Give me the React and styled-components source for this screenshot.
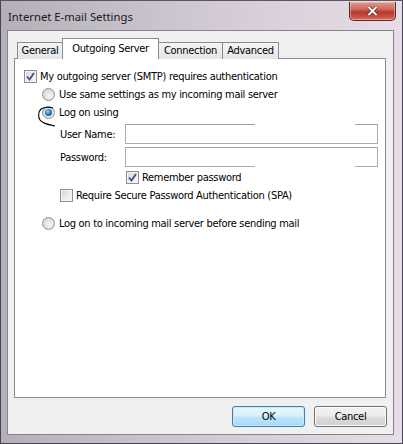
import React from "react";
import styled, { createGlobalStyle, css } from "styled-components";

const Global = createGlobalStyle`
  html, body { margin: 0; padding: 0; background: #ffffff; overflow: hidden; }
  * { box-sizing: border-box; }
`;

const Window = styled.div`
  width: 403px;
  height: 444px;
  display: flex;
  flex-direction: column;
  border: 1px solid #4a4452;
  border-top-color: #5a5560;
  background: linear-gradient(90deg, #b4afba 0%, #c8c1cb 35%, #dbd1dc 70%, #e6dde6 100%);
  font-family: "DejaVu Sans Condensed", "DejaVu Sans", sans-serif;
  font-size: 11px;
  letter-spacing: -0.3px;
  color: #000;
`;

const TitleBar = styled.div`
  height: 29px;
  display: flex;
  align-items: center;
  padding-left: 7px;
`;

const Title = styled.span`
  font-family: "Noto Sans", "Open Sans", sans-serif;
  font-size: 11.3px;
  letter-spacing: 0;
  color: #1a1a1a;
  margin-top: 1px;
`;

const CloseButton = styled.div`
  margin-left: auto;
  margin-right: 6px;
  align-self: flex-start;
  margin-top: 1px;
  width: 47px;
  height: 19px;
  border: 1px solid #5b2a26;
  border-top: none;
  border-radius: 0 0 5px 5px;
  background: linear-gradient(#dd9a90 0%, #cf6a5c 40%, #b8382c 55%, #c85446 85%, #d97a68 100%);
  box-shadow: inset 0 0 0 1px rgba(255, 220, 210, 0.45);
  display: flex;
  align-items: center;
  justify-content: center;
`;

const Client = styled.div`
  flex: 1;
  margin: 0 8px 8px 6px;
  background: #f0f0f0;
  border: 1px solid #858585;
  padding: 7px 7px 0 6px;
  display: flex;
  flex-direction: column;
`;

const TabStrip = styled.div`
  display: flex;
  align-items: flex-end;
  height: 21px;
  margin-bottom: -1px;
  padding-left: 4px;
  position: relative;
  z-index: 2;
`;

const Tab = styled.div`
  width: ${(p) => p.$w}px;
  height: 17px;
  display: flex;
  align-items: center;
  justify-content: center;
  border: 1px solid #898c95;
  border-bottom: none;
  margin-left: -1px;
  background: linear-gradient(#f4f4f4, #e5e5e5);
  padding-bottom: 1px;
  ${(p) =>
    p.$active &&
    css`
      height: 21px;
      background: #ffffff;
      position: relative;
      z-index: 3;
      padding-bottom: 2px;
    `}
`;

const Panel = styled.div`
  height: 340px;
  background: #ffffff;
  border: 1px solid #898c95;
  position: relative;
  z-index: 1;
  padding: 8px 7px 0 9px;
  display: flex;
  flex-direction: column;
`;

const Row = styled.div`
  position: relative;
  display: flex;
  align-items: center;
  height: ${(p) => p.$h || 18}px;
  margin-left: ${(p) => p.$indent || 0}px;
  margin-top: ${(p) => p.$top || 0}px;
  gap: ${(p) => (p.$field ? 0 : 3)}px;
`;

const Label = styled.span`
  white-space: nowrap;
`;

const FieldLabel = styled.span`
  width: 65px;
  white-space: nowrap;
`;

const Box = styled.span`
  width: 13px;
  height: 13px;
  flex: none;
  border: 1px solid #8e8f8f;
  background: linear-gradient(135deg, #d2d5da 0%, #eeeeee 60%, #f8f8f8 100%);
  box-shadow: inset 0 0 0 1px #f4f4f4;
  display: flex;
  align-items: center;
  justify-content: center;
`;

const Radio = styled.span`
  width: 13px;
  height: 13px;
  flex: none;
  border-radius: 50%;
  border: 1px solid #8e8f8f;
  background: radial-gradient(circle at 60% 60%, #f6f6f6 0%, #dcdcdc 60%, #c8ccd2 100%);
  display: flex;
  align-items: center;
  justify-content: center;
  margin-right: 1px;
`;

const Dot = styled.span`
  width: 7px;
  height: 7px;
  border-radius: 50%;
  background: radial-gradient(circle at 40% 35%, #9fd8f6 0%, #2a7bbd 45%, #0d3f78 100%);
`;

const Field = styled.div`
  flex: 1;
  height: 20px;
  border: 1px solid #abadb3;
  border-top-color: #a0a2a8;
  background: #fff;
  position: relative;
  &::after {
    content: "";
    display: ${(p) => (p.$gap ? "block" : "none")};
    position: absolute;
    left: 129px;
    width: 100px;
    height: 1px;
    background: #ffffff;
    ${(p) => (p.$gap === "top" ? "top: -1px;" : "bottom: -1px;")}
  }
`;

const Scribble = styled.svg`
  position: absolute;
  left: -4px;
  top: 3px;
  overflow: visible;
  pointer-events: none;
`;

const ButtonRow = styled.div`
  display: flex;
  justify-content: flex-end;
  gap: 9px;
  margin-top: 8px;
  margin-right: -1px;
`;

const Button = styled.div`
  width: 73px;
  height: 21px;
  border-radius: 3px;
  display: flex;
  align-items: center;
  justify-content: center;
  border: 1px solid #707070;
  background: linear-gradient(#f2f2f2 0%, #ebebeb 48%, #dddddd 52%, #cfcfcf 100%);
  box-shadow: inset 0 0 0 1px #fcfcfc;
  ${(p) =>
    p.$default &&
    css`
      border-color: #3c7fb1;
      background: linear-gradient(#eaf6fd 0%, #d9f0fc 48%, #bee6fd 52%, #a7d9f5 100%);
      box-shadow: inset 0 0 0 1px #c8e8f8;
    `}
`;

const Check = () => (
  <svg width="9" height="9" viewBox="0 0 9 9">
    <path d="M1 4.5 L3.5 7.5 L8 1" fill="none" stroke="#3b4f8a" strokeWidth="1.8" />
  </svg>
);

export default function App() {
  return (
    <>
      <Global />
      <Window>
        <TitleBar>
          <Title>Internet E-mail Settings</Title>
          <CloseButton>
            <svg width="11" height="10" viewBox="0 0 11 10">
              <path d="M1.5 1 L9.5 9 M9.5 1 L1.5 9" stroke="#5a1c16" strokeWidth="3.2" />
              <path d="M1.5 1 L9.5 9 M9.5 1 L1.5 9" stroke="#ffffff" strokeWidth="2" />
            </svg>
          </CloseButton>
        </TitleBar>
        <Client>
          <TabStrip>
            <Tab $w={46}>General</Tab>
            <Tab $w={97} $active>Outgoing Server</Tab>
            <Tab $w={65}>Connection</Tab>
            <Tab $w={57}>Advanced</Tab>
          </TabStrip>
          <Panel>
            <Row>
              <Box><Check /></Box>
              <Label>My outgoing server (SMTP) requires authentication</Label>
            </Row>
            <Row $indent={18}>
              <Radio />
              <Label>Use same settings as my incoming mail server</Label>
            </Row>
            <Row $indent={18}>
              <Radio><Dot /></Radio>
              <Label>Log on using</Label>
              <Scribble width="20" height="22" viewBox="0 0 20 22">
                <path
                  d="M15 2 C11 1 6 1 3 3 C0 6 0 11 2 14 C4 17 8 18 17 20"
                  fill="none"
                  stroke="#000"
                  strokeWidth="1.1"
                />
              </Scribble>
            </Row>
            <Row $indent={36} $h={20} $top={3} $field>
              <FieldLabel>User Name:</FieldLabel>
              <Field $gap="top" />
            </Row>
            <Row $indent={36} $h={20} $top={3} $field>
              <FieldLabel>Password:</FieldLabel>
              <Field $gap="bottom" />
            </Row>
            <Row $indent={102} $top={1}>
              <Box><Check /></Box>
              <Label>Remember password</Label>
            </Row>
            <Row $indent={36}>
              <Box />
              <Label>Require Secure Password Authentication (SPA)</Label>
            </Row>
            <Row $indent={18} $top={10}>
              <Radio />
              <Label>Log on to incoming mail server before sending mail</Label>
            </Row>
          </Panel>
          <ButtonRow>
            <Button $default>OK</Button>
            <Button>Cancel</Button>
          </ButtonRow>
        </Client>
      </Window>
    </>
  );
}
